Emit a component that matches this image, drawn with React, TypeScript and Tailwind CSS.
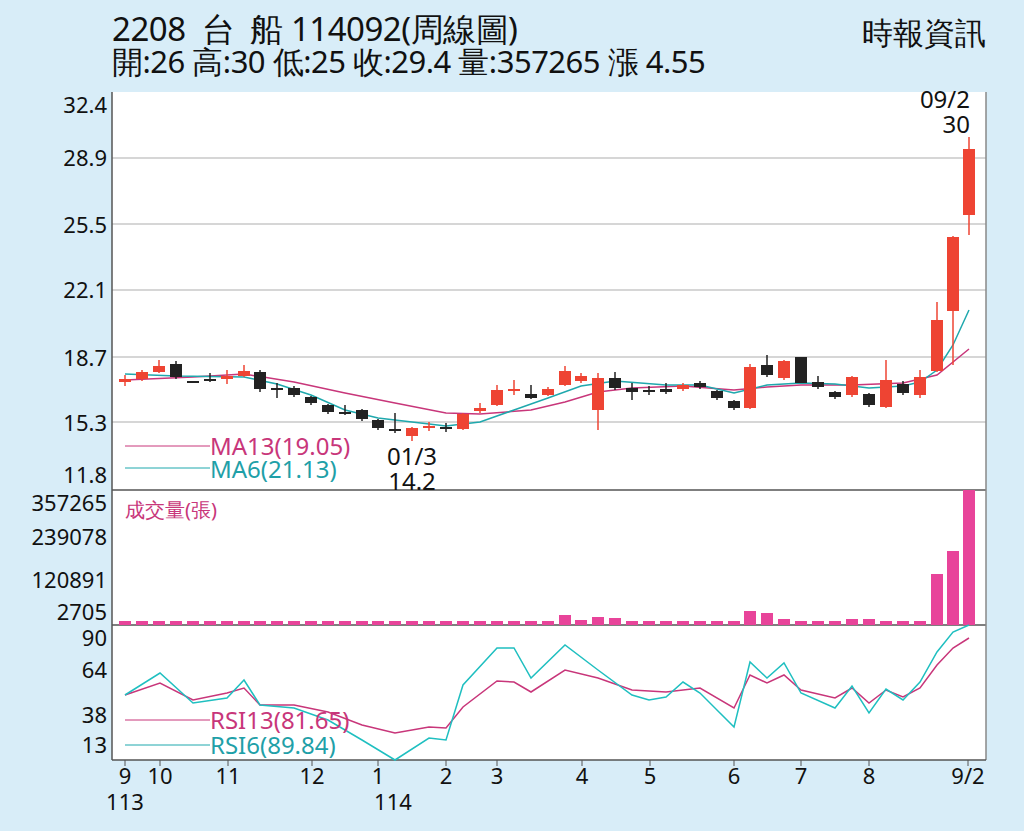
const xs = [125,142,159,176,193,210,227,244,260,277,294,311,328,345,362,378,395,412,429,446,463,480,497,514,531,548,565,581,598,615,632,649,666,683,700,717,734,750,767,784,801,818,835,852,869,886,903,920,937,953,969];
const c: [number,number,number,number,number][] = [
[379,382,375,386,1],[372,379,370,381,1],[366,372,360,373,1],[364,377,361,379,0],[381,383,381,383,0],[379,381,373,382,0],[376,379,370,384,1],[371,376,365,377,1],[372,389,370,392,0],[388,389,383,398,0],[388,395,386,397,0],[397,403,396,405,0],[405,412,404,414,0],[412,413,405,415,0],[410,419,409,421,0],[420,428,419,430,0],[429,431,413,433,0],[428,436,427,441,1],[426,427,422,431,1],[427,428,423,432,0],[414,429,413,430,1],[408,411,403,413,1],[390,405,385,406,1],[389,391,380,395,1],[394,398,385,399,0],[389,395,387,396,1],[371,385,366,386,1],[376,381,373,383,1],[378,410,373,430,1],[378,388,372,390,0],[388,392,383,400,0],[390,391,386,395,0],[389,392,383,394,0],[385,389,383,391,1],[383,387,381,389,0],[391,398,390,400,0],[401,408,400,410,0],[367,408,364,409,1],[365,375,355,377,0],[361,378,360,380,1],[357,383,357,383,0],[382,387,376,389,0],[392,397,391,399,0],[377,395,376,397,1],[394,405,393,407,0],[380,407,360,408,1],[384,393,381,395,0],[377,395,370,398,1],[320,371,302,372,1],[237,311,236,365,1],[149,215,137,235,1]];
const vol: Record<number, number> = {565:615,581:620,598:617,615:618,750:611,767:613,784:619,852:619,869:619,937:574,953:551,969:490};
const pts = (a: number[]) => { const s: string[] = []; for (let i = 0; i < a.length; i += 2) s.push(a[i] + ',' + a[i+1]); return s.join(' '); };
const ma13 = pts([125,380,193,377,244,374,294,382,345,393,395,403,446,413,480,414,531,410,565,402,598,392,632,388,683,386,734,390,767,387,801,385,852,385,903,383,937,375,969,349]);
const ma6 = pts([125,374,176,376,244,377,277,384,311,395,345,410,378,418,412,422,446,426,480,422,514,410,548,398,581,386,615,381,666,385,700,385,734,393,767,385,801,383,835,384,869,388,903,386,920,382,937,370,953,345,969,310]);
const rsi13 = pts([125,695,160,683,193,700,227,693,244,688,260,705,294,705,328,712,362,725,395,733,429,727,446,728,463,707,497,681,514,682,531,692,565,670,598,678,632,690,666,692,700,688,734,708,750,675,767,683,784,675,801,690,835,698,852,688,869,703,886,690,903,697,920,688,937,665,953,648,969,638]);
const rsi6 = pts([125,695,160,673,193,703,227,698,244,680,260,705,294,708,328,720,362,740,395,760,429,738,446,740,463,685,497,648,514,648,531,678,565,645,598,670,632,695,649,700,666,697,683,682,700,693,734,727,750,662,767,678,784,663,801,693,835,708,852,686,869,713,886,689,903,700,920,682,937,652,953,632,969,625]);
const L = (t: string, y: number) => <text x={107} y={y} textAnchor="end" fontSize={22} fill="#111">{t}</text>;
const xl: [string, number][] = [['9',125],['10',160],['11',228],['12',312],['1',378],['2',446],['3',497],['4',582],['5',650],['6',734],['7',801],['8',869],['9/2',968]];
export default function App() {
  return (
    <div className="w-[1024px] h-[831px] bg-[#d8edf8] overflow-hidden font-['Liberation_Serif','Noto_Sans_CJK_TC',serif]">
      <div className="h-[92px] flex justify-between pl-[112px] pr-[38px] pt-[12px] text-[#111]">
        <div className="flex flex-col leading-[33px]">
          <div className="text-[33px] tracking-[-0.5px]">2208&nbsp; 台&nbsp; 船 114092(周線圖)</div>
          <div className="text-[31px] tracking-[-0.5px]">開:26 高:30 低:25 收:29.4 量:357265 漲 4.55</div>
        </div>
        <div className="text-[31px] leading-[40px]">時報資訊</div>
      </div>
      <svg width={1024} height={739} viewBox="0 92 1024 739" className="block overflow-visible">
        <rect x={112} y={92} width={874} height={668} fill="#fff" />
        {[158,224,290,357,422].map(y => <line key={y} x1={112} x2={986} y1={y} y2={y} stroke="#c8c8c8" strokeWidth={1.5} />)}
        <line x1={112} x2={986} y1={490} y2={490} stroke="#555" strokeWidth={1.5} />
        <line x1={112} x2={986} y1={625} y2={625} stroke="#555" strokeWidth={1.5} />
        <line x1={112} x2={112} y1={92} y2={760} stroke="#555" strokeWidth={1.5} />
        <line x1={986} x2={986} y1={92} y2={760} stroke="#888" strokeWidth={1.5} />
        <line x1={112} x2={986} y1={760} y2={760} stroke="#555" strokeWidth={1.5} />
        {xl.map(([t, x]) => <line key={t} x1={x} x2={x} y1={760} y2={766} stroke="#555" />)}
        <polyline points={ma13} fill="none" stroke="#c8367a" strokeWidth={1.5} />
        <polyline points={ma6} fill="none" stroke="#1fa8ad" strokeWidth={1.5} />
        {c.map((d, i) => { const x = xs[i]; const col = d[4] ? '#ee4433' : '#222'; return (
          <g key={i}>
            <line x1={x} x2={x} y1={d[2]} y2={d[3]} stroke={col} strokeWidth={1.5} />
            <rect x={x-6} y={d[0]} width={12} height={Math.max(d[1]-d[0], 2)} fill={col} />
          </g>); })}
        {xs.map(x => { const top = vol[x] ?? 621; return <rect key={x} x={x-6} y={top} width={12} height={625-top} fill="#e8449a" />; })}
        <polyline points={rsi13} fill="none" stroke="#c8367a" strokeWidth={1.5} />
        <polyline points={rsi6} fill="none" stroke="#1fbfc0" strokeWidth={1.5} />
        <line x1={125} x2={210} y1={446} y2={446} stroke="#c8367a" />
        <line x1={125} x2={210} y1={468} y2={468} stroke="#1fa8ad" />
        <line x1={125} x2={210} y1={720} y2={720} stroke="#c8367a" />
        <line x1={125} x2={210} y1={745} y2={745} stroke="#1fa8ad" />
        <g fontSize={24}>
          <text x={210} y={455} fill="#c8367a">MA13(19.05)</text>
          <text x={210} y={478} fill="#1fa0a8">MA6(21.13)</text>
          <text x={210} y={729} fill="#c8367a">RSI13(81.65)</text>
          <text x={210} y={754} fill="#1fa0a8">RSI6(89.84)</text>
          <text x={125} y={517} fill="#c8367a" fontSize={20}>成交量(張)</text>
          <text x={412} y={465} textAnchor="middle" fill="#111">01/3</text>
          <text x={412} y={490} textAnchor="middle" fill="#111">14.2</text>
          <text x={970} y={108} textAnchor="end" fill="#111">09/2</text>
          <text x={970} y={133} textAnchor="end" fill="#111">30</text>
        </g>
        {L('32.4',113)}{L('28.9',166)}{L('25.5',233)}{L('22.1',298)}{L('18.7',366)}{L('15.3',431)}{L('11.8',483)}
        {L('357265',511)}{L('239078',545)}{L('120891',588)}{L('2705',620)}
        {L('90',646)}{L('64',678)}{L('38',723)}{L('13',753)}
        {xl.map(([t, x]) => <text key={t} x={x} y={784} textAnchor="middle" fontSize={22} fill="#111">{t}</text>)}
        <text x={125} y={810} textAnchor="middle" fontSize={22} fill="#111">113</text>
        <text x={393} y={810} textAnchor="middle" fontSize={22} fill="#111">114</text>
      </svg>
    </div>
  );
}
